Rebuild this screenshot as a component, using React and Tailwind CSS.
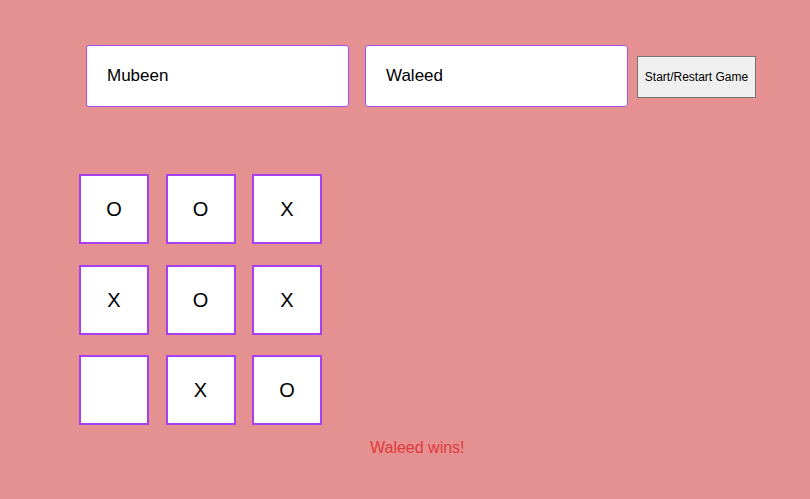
export default function App() {
  const board = ["O", "O", "X", "X", "O", "X", "", "X", "O"];
  return (
    <div className="w-[810px] h-[499px] bg-[#e59191] overflow-hidden" style={{ fontFamily: '"Liberation Sans", Arial, sans-serif' }}>
      <div className="flex items-center pt-[45px] pl-[86px]">
        <div className="w-[263px] h-[62px] bg-white border border-[#a64ff0] rounded-[3px] flex items-center pl-[20px] text-[17px] text-black">Mubeen</div>
        <div className="w-[263px] h-[62px] bg-white border border-[#a64ff0] rounded-[3px] flex items-center pl-[20px] text-[17px] text-black ml-[16px]">Waleed</div>
        <div className="w-[119px] h-[42px] bg-[#efefef] border border-[#767676] flex items-center justify-center text-[12px] text-black ml-[9px] mt-[1px]">Start/Restart Game</div>
      </div>
      <div className="grid grid-cols-[70px_70px_70px] gap-x-[16.5px] gap-y-[20.5px] ml-[79px] mt-[67px] w-fit">
        {board.map((v, i) => (
          <div key={i} className="w-[70px] h-[70px] bg-white border-2 border-[#a740f0] flex items-center justify-center text-[20px] text-black">{v}</div>
        ))}
      </div>
      <div className="ml-[370px] mt-[11px] text-[16px] text-[#e0393c]">Waleed wins!</div>
    </div>
  );
}
